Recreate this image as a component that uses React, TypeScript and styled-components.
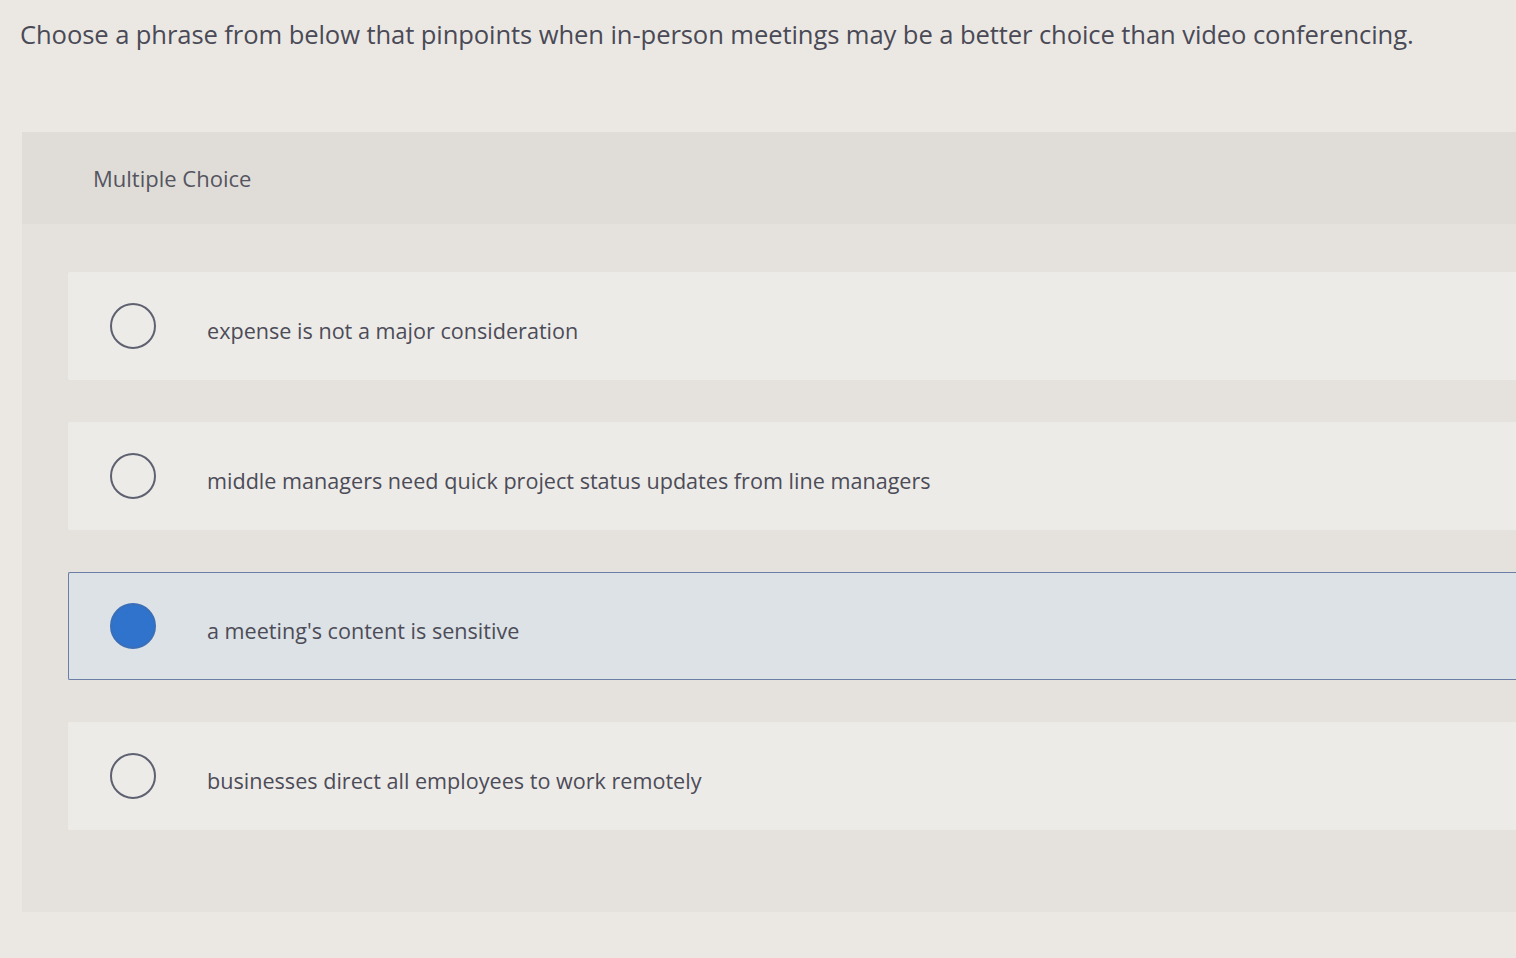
import React, { useState } from 'react';
import styled, { createGlobalStyle } from 'styled-components';

const GlobalStyle = createGlobalStyle`
  html, body {
    margin: 0;
    padding: 0;
    background: #ebe8e4;
    font-family: 'Open Sans', 'Liberation Sans', sans-serif;
  }
`;

const Page = styled.div`
  width: 1516px;
  height: 958px;
  overflow: hidden;
  background: #ebe8e4;
  padding: 12px 0 0 20px;
  box-sizing: border-box;
`;

const Question = styled.h1`
  margin: 0;
  font-size: 25.6px;
  font-weight: 500;
  line-height: 46px;
  color: #4a4a56;
  letter-spacing: -0.1px;
`;

const Panel = styled.section`
  margin-top: 74px;
  margin-left: 2px;
  background: #e5e2de;
  height: 780px;
  display: flex;
  flex-direction: column;
`;

const PanelHeader = styled.div`
  background: #e0ddd9;
  height: 92px;
  padding-left: 71px;
  display: flex;
  align-items: center;
  font-size: 22px;
  font-weight: 500;
  color: #55555f;
`;

const Options = styled.div`
  display: flex;
  flex-direction: column;
  gap: 42px;
  padding: 48px 0 0 46px;
`;

const Option = styled.label<{ $selected: boolean }>`
  display: flex;
  align-items: center;
  height: 108px;
  box-sizing: border-box;
  background: ${(p) => (p.$selected ? '#dde2e6' : '#edebe8')};
  border: 1px solid ${(p) => (p.$selected ? '#6a7ea6' : 'transparent')};
  border-right: none;
  border-radius: 2px 0 0 2px;
  padding-left: 41px;
  cursor: pointer;
`;

const Radio = styled.span<{ $checked: boolean }>`
  flex: none;
  width: 46px;
  height: 46px;
  box-sizing: border-box;
  border-radius: 50%;
  border: 2px solid ${(p) => (p.$checked ? '#3a6fb8' : '#5e6170')};
  background: ${(p) => (p.$checked ? '#2f73cc' : 'transparent')};
`;

const OptionText = styled.span`
  margin-left: 51px;
  font-size: 21.6px;
  font-weight: 500;
  color: #4c4c58;
  padding-top: 8px;
`;

const choices = [
  'expense is not a major consideration',
  'middle managers need quick project status updates from line managers',
  "a meeting's content is sensitive",
  'businesses direct all employees to work remotely',
];

const App: React.FC = () => {
  const [selected, setSelected] = useState(2);

  return (
    <Page>
      <GlobalStyle />
      <Question>
        Choose a phrase from below that pinpoints when in-person meetings may be a better choice than video conferencing.
      </Question>
      <Panel>
        <PanelHeader>Multiple Choice</PanelHeader>
        <Options>
          {choices.map((text, i) => (
            <Option key={text} $selected={selected === i} onClick={() => setSelected(i)}>
              <Radio $checked={selected === i} />
              <OptionText>{text}</OptionText>
            </Option>
          ))}
        </Options>
      </Panel>
    </Page>
  );
};

export default App;
